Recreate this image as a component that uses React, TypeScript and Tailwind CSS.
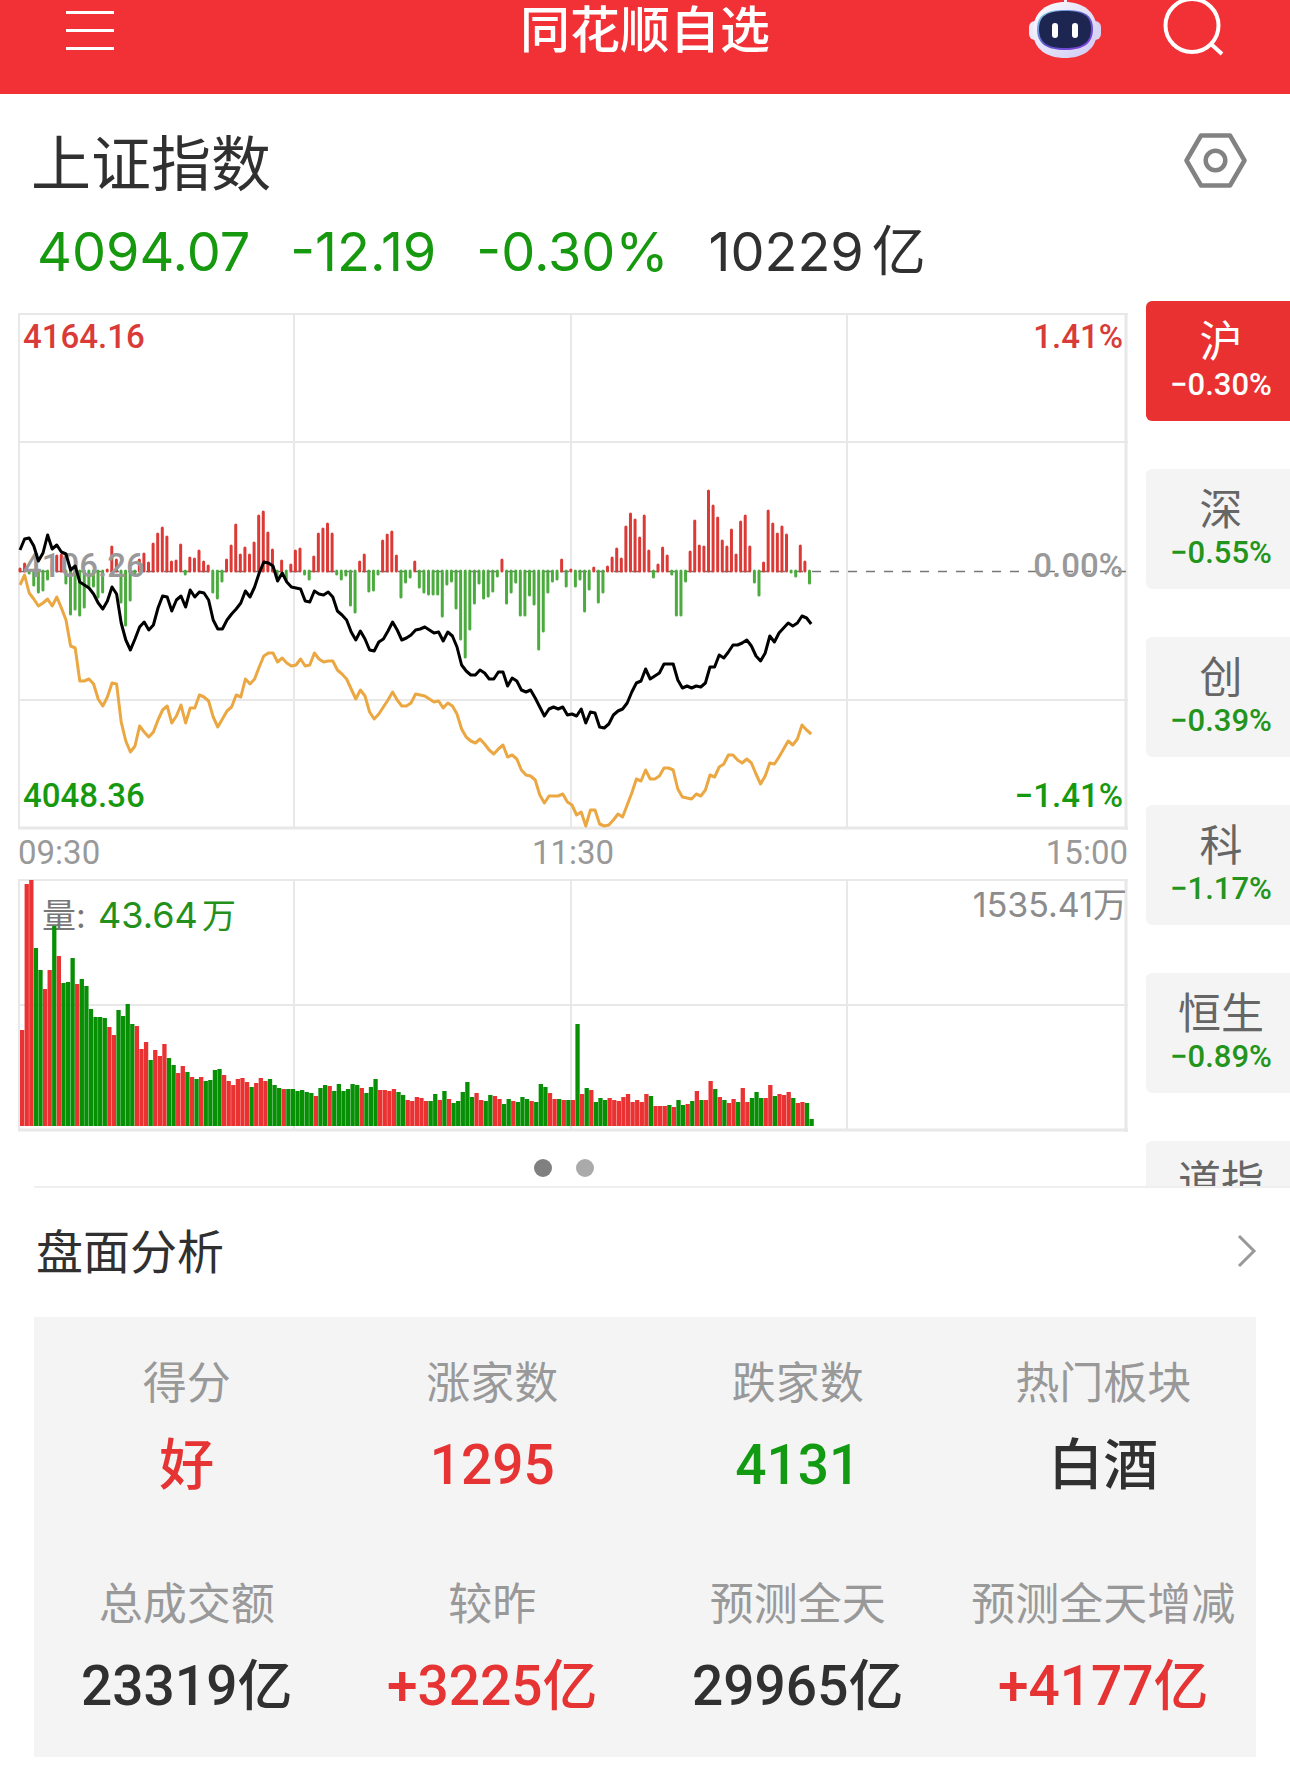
import { useState } from 'react';
import clsx from 'clsx';

const BAR_STEP = 4.59;
const LINE_STEP = 4.6;

// each entry is one trading minute
const momentum = [
  2, 7, -2, -14, -21, -19, -8, 7, 15, 16, -12, -43, -38, -44, -36, -15, -15, -26,
  -21, 1, 24, 11, -31, -54, -29, -4, 11, 17, 8, 27, 37, 43, 34, 9, 10, 26, -3, 13,
  12, 20, 9, 5, -21, -27, -10, 11, 25, 46, 16, 23, 16, 28, 55, 59, 38, 21, -6, 10,
  -8, 6, 20, 22, -3, -8, 14, 37, 42, 47, 37, -3, -8, -4, -34, -41, 9, 16, -20,
  -19, -3, 30, 36, 39, 15, -26, -11, -6, 9, -16, -21, -23, -23, -23, -45, -13,
  -10, -37, -68, -86, -58, -32, -12, -27, -25, -20, -5, 11, -32, -21, -11, -44,
  -44, -24, -33, -78, -60, -21, -10, -8, 11, -15, 1, -15, -8, -40, -18, 3, -31,
  -21, 4, 13, 22, 12, 44, 57, 51, 33, 55, 20, -6, 6, 23, 15, -3, -44, -44, -10,
  19, 50, 25, 24, 80, 65, 53, 30, 24, 41, 16, 49, 55, 24, -11, -24, 8, 60, 47,
  37, 44, 36, -1, -5, 25, 9, -12,
];

const price = [
  550, 539, 538, 546, 561, 553, 535, 549, 545, 552, 554, 570, 566, 582, 585, 588,
  594, 603, 609, 601, 587, 594, 623, 640, 650, 639, 627, 622, 630, 625, 608, 596,
  597, 611, 600, 596, 607, 590, 597, 592, 593, 600, 620, 629, 629, 620, 614, 609,
  603, 591, 597, 587, 573, 562, 563, 566, 581, 573, 582, 587, 588, 589, 601, 602,
  591, 594, 595, 592, 597, 611, 615, 620, 632, 640, 631, 639, 650, 651, 642, 639,
  631, 622, 630, 640, 638, 635, 630, 629, 627, 630, 633, 632, 641, 632, 636, 647,
  665, 671, 675, 675, 670, 673, 679, 679, 672, 672, 686, 678, 681, 690, 692, 690,
  698, 707, 716, 709, 707, 709, 707, 715, 714, 716, 709, 723, 712, 713, 727, 728,
  724, 715, 711, 709, 703, 692, 683, 681, 669, 679, 676, 673, 664, 664, 664, 680,
  688, 686, 688, 686, 687, 683, 667, 667, 655, 658, 652, 645, 645, 643, 640, 646,
  656, 661, 653, 636, 642, 633, 628, 623, 626, 623, 616, 618, 624,
];

const average = [
  585, 575, 593, 599, 606, 603, 599, 606, 597, 608, 620, 646, 648, 681, 681, 679,
  684, 699, 706, 697, 683, 684, 722, 741, 752, 746, 726, 732, 737, 732, 720, 710,
  706, 723, 716, 705, 723, 708, 708, 695, 697, 701, 717, 727, 719, 711, 707, 695,
  697, 679, 684, 679, 667, 656, 653, 653, 662, 658, 663, 666, 665, 659, 666, 665,
  653, 659, 662, 661, 661, 670, 674, 679, 689, 699, 690, 696, 712, 719, 714, 707,
  700, 692, 700, 706, 706, 703, 694, 695, 696, 699, 702, 701, 708, 703, 706, 714,
  729, 737, 741, 743, 739, 744, 750, 754, 749, 745, 757, 755, 759, 770, 775, 776,
  780, 795, 803, 796, 796, 796, 794, 802, 805, 815, 812, 826, 810, 810, 824, 826,
  825, 820, 814, 817, 805, 793, 779, 781, 770, 779, 779, 776, 768, 768, 770, 789,
  797, 798, 799, 794, 796, 790, 775, 777, 767, 764, 755, 755, 760, 763, 759, 763,
  774, 784, 776, 763, 764, 757, 749, 741, 745, 739, 725, 730, 734,
];

// positive = rising minute, negative = falling minute
const volume = [
  96, 242, 246, -178, -156, 137, 156, -200, 170, -143, -144, -168, 142, -147,
  -140, -117, -109, -109, -108, 99, 91, -116, -110, -122, -102, 100, 77, 84, -66,
  76, 70, 82, -68, -61, 53, 60, -54, 49, -47, 49, -45, -46, -56, -57, 51, 45, 41,
  47, 48, 44, -39, 43, 48, 45, -47, -41, -38, 37, -37, -37, -35, -36, -34, -33,
  30, -38, -41, 40, -35, -42, -35, -37, -42, -41, 38, -33, -39, -47, 36, 36, 35,
  37, -34, -31, 26, 25, 29, 28, 25, -25, -32, 26, -35, 27, -23, -25, -34, -44,
  -29, 33, 26, -25, -31, 30, 27, -22, -27, 25, -24, -29, -27, 25, -24, -42, -39,
  33, 27, -27, 26, -26, 26, -102, 32, -38, 36, -24, -28, -26, 28, 26, 25, 29, 32,
  24, 26, 24, 32, -30, 20, 20, 20, -21, 19, -26, -21, 22, -25, 35, -26, 26, 45,
  -37, 29, -26, 23, 27, -24, 38, 24, -28, -34, -28, 28, 41, -30, 32, 31, 34, -28,
  23, 24, -23, -7,
];

const markets = [
  { name: '沪', change: '−0.30%' },
  { name: '深', change: '−0.55%' },
  { name: '创', change: '−0.39%' },
  { name: '科', change: '−1.17%' },
  { name: '恒生', change: '−0.89%' },
  { name: '道指', change: '' },
];

const stats = [
  { label: '得分', value: '好', color: 'text-[#e63434]' },
  { label: '涨家数', value: '1295', color: 'text-[#e63434]' },
  { label: '跌家数', value: '4131', color: 'text-[#129a12]' },
  { label: '热门板块', value: '白酒', color: 'text-[#303030]' },
  { label: '总成交额', value: '23319亿', color: 'text-[#303030]' },
  { label: '较昨', value: '+3225亿', color: 'text-[#e63434]' },
  { label: '预测全天', value: '29965亿', color: 'text-[#303030]' },
  { label: '预测全天增减', value: '+4177亿', color: 'text-[#e63434]' },
];

const toPoints = (ys: number[]) =>
  ys.map((y, i) => `${(2 + i * LINE_STEP).toFixed(1)},${y - 313}`).join(' ');

function RobotIcon() {
  return (
    <svg viewBox="0 0 74 60" className="h-[60px] w-[74px]" aria-hidden="true">
      <defs>
        <linearGradient id="shell" x1="0" y1="0" x2="1" y2="1">
          <stop offset="0" stopColor="#ffffff" />
          <stop offset="0.5" stopColor="#e4e2f8" />
          <stop offset="1" stopColor="#cfc9f3" />
        </linearGradient>
        <linearGradient id="rim" x1="0" y1="0" x2="1" y2="1">
          <stop offset="0" stopColor="#8fdcf0" />
          <stop offset="0.5" stopColor="#5a55c8" />
          <stop offset="1" stopColor="#8a3ce0" />
        </linearGradient>
      </defs>
      <rect x="36" y="0" width="3" height="4" fill="#f1eefc" />
      <rect x="1" y="21" width="14" height="19" rx="6" fill="#ece9fb" />
      <rect x="59" y="21" width="14" height="19" rx="6" fill="#d9d4f6" />
      <path
        d="M37 2C54 2 69 11 69 31C69 50 54 58 37 58C20 58 5 50 5 31C5 11 20 2 37 2Z"
        fill="url(#shell)"
      />
      <path
        d="M37 10C56 10 65 15 65 29C65 44 55 50 37 50C19 50 9 44 9 29C9 15 18 10 37 10Z"
        fill="url(#rim)"
      />
      <path
        d="M37 11C55 11 63 16 63 29C63 43 54 48 37 48C20 48 11 43 11 29C11 16 19 11 37 11Z"
        fill="#1c2650"
      />
      <rect x="24" y="23" width="6" height="15" rx="3" fill="#fff" />
      <rect x="44" y="23" width="6" height="15" rx="3" fill="#fff" />
    </svg>
  );
}

function Header() {
  return (
    <header className="grid grid-cols-[1fr_auto_1fr] items-start bg-[#f23136] px-[66px] pb-[34px] text-white">
      <button type="button" aria-label="菜单" className="h-[60px] w-12">
        <svg viewBox="0 0 48 60" className="h-[60px] w-12">
          <path d="M0 12.5H48M0 30.5H48M0 48.5H48" stroke="currentColor" strokeWidth="3" />
        </svg>
      </button>
      <h1 className="text-[50px] leading-[52px] font-medium">同花顺自选</h1>
      <div className="flex justify-end gap-[60px]">
        <button type="button" aria-label="智能助手">
          <RobotIcon />
        </button>
        <button type="button" aria-label="搜索">
          <svg viewBox="0 0 62 60" className="h-[60px] w-[62px]" fill="none">
            <circle cx="30" cy="25.5" r="26.5" stroke="currentColor" strokeWidth="4" />
            <path d="M49 44L60 54" stroke="currentColor" strokeWidth="4" />
          </svg>
        </button>
      </div>
    </header>
  );
}

function Quote() {
  return (
    <section className="pr-[43px] pl-[31px]">
      <div className="flex items-center justify-between pt-6">
        <h2 className="text-[60px] leading-[84px] text-[#303030]">上证指数</h2>
        <button type="button" aria-label="设置">
          <svg
            viewBox="0 0 64 56"
            className="h-14 w-16"
            fill="none"
            stroke="#828282"
            strokeWidth="4.5"
            strokeLinejoin="round"
          >
            <path d="M18 3.5H47L61.5 28.5L47 53.5H18L3.5 28.5Z" />
            <circle cx="32.5" cy="28.5" r="9.8" />
          </svg>
        </button>
      </div>
      <p className="flex gap-10 pl-1.5 font-[Inter,'Noto_Sans_CJK_SC',sans-serif] text-[54px] leading-[99px] text-[#16990f]">
        <span>4094.07</span>
        <span>-12.19</span>
        <span>-0.30%</span>
        <span className="flex gap-2 text-[#303030]">
          10229<span>亿</span>
        </span>
      </p>
    </section>
  );
}

function PriceChart() {
  return (
    <svg
      viewBox="0 0 1110 517"
      className="block w-full font-[Roboto,sans-serif] text-[33px] font-medium"
      role="img"
      aria-label="分时走势"
    >
      <g fill="none" stroke="#e8e8e8" strokeWidth="2">
        <path d="M1 0V516M276 0V516M553 0V516M829 0V516M0 1H1110M0 129H1110M0 387H1110" />
        <path d="M1108 0V517M0 515H1110" strokeWidth="3" />
      </g>
      <path d="M2 258.5H1108" stroke="#777" strokeWidth="1.5" strokeDasharray="9 9" />
      {momentum.map((v, i) => (
        <line
          key={i}
          x1={2 + i * BAR_STEP}
          x2={2 + i * BAR_STEP}
          y1="258"
          y2={258 - v}
          stroke={v > 0 ? '#dc3a36' : '#4cab3e'}
          strokeWidth="3"
          strokeLinecap="round"
        />
      ))}
      <text x="5" y="264" fill="#999">4106.26</text>
      <text x="1105" y="264" fill="#999" textAnchor="end">0.00%</text>
      <g fill="none" strokeWidth="3" strokeLinejoin="round">
        <polyline points={toPoints(average)} stroke="#eba742" />
        <polyline points={toPoints(price)} stroke="#000" />
      </g>
      <text x="5" y="35" fill="#d93b38">4164.16</text>
      <text x="1105" y="35" fill="#d93b38" textAnchor="end">1.41%</text>
      <text x="5" y="494" fill="#16990f">4048.36</text>
      <text x="1105" y="494" fill="#16990f" textAnchor="end">−1.41%</text>
    </svg>
  );
}

function VolumeChart() {
  return (
    <svg
      viewBox="0 0 1110 253"
      className="block w-full font-[Inter,'Noto_Sans_CJK_SC',sans-serif] text-[34px]"
      role="img"
      aria-label="成交量"
    >
      <g fill="none" stroke="#e8e8e8" strokeWidth="2">
        <path d="M1 0V252M276 0V252M553 0V252M829 0V252M0 1H1110M0 126H1110" />
        <path d="M1108 0V253M0 251H1110" strokeWidth="3" />
      </g>
      <text x="24" y="49" fill="#777">量:</text>
      <text x="80" y="49" fill="#23901c" className="text-[36px]">43.64</text>
      <text x="184" y="49" fill="#23901c">万</text>
      <text x="1109" y="38" fill="#8c8c8c" textAnchor="end">1535.41万</text>
      {volume.map((v, i) => (
        <rect
          key={i}
          x={2 + i * BAR_STEP}
          y={247 - Math.abs(v)}
          width="4.3"
          height={Math.abs(v)}
          fill={v > 0 ? '#e93231' : '#078f05'}
        />
      ))}
    </svg>
  );
}

function MarketTabs() {
  const [active, setActive] = useState('沪');

  return (
    <nav className="flex w-36 flex-col gap-12 overflow-hidden contain-size">
      {markets.map((market) => (
        <button
          key={market.name}
          type="button"
          onClick={() => setActive(market.name)}
          className={clsx(
            'flex h-[120px] shrink-0 flex-col items-center rounded-l-md pt-2 pl-1.5',
            active === market.name ? 'bg-[#e93131] text-white' : 'bg-[#f4f4f4] text-[#666]',
          )}
        >
          <span className="text-[43px] leading-[58px]">{market.name}</span>
          {market.change && (
            <span
              className={clsx(
                'font-[Roboto,sans-serif] text-[31px] leading-9 font-medium',
                active !== market.name && 'text-[#23941c]',
              )}
            >
              {market.change}
            </span>
          )}
        </button>
      ))}
    </nav>
  );
}

function Analysis() {
  return (
    <section className="ml-[34px] border-t-2 border-[#efefef]">
      <a href="#analysis" className="flex items-center justify-between pr-[33px] pb-[7px] pl-0.5">
        <h2 className="text-[47px] leading-[122px] text-[#303030]">盘面分析</h2>
        <svg viewBox="0 0 20 38" className="h-[38px] w-5" fill="none">
          <path d="M2 6L17 21L2 36" stroke="#999" strokeWidth="3" />
        </svg>
      </a>
      <dl className="mr-[34px] grid grid-cols-4 gap-y-[55px] bg-[#f4f4f4] pt-[33px] pb-5 text-center">
        {stats.map((stat) => (
          <div key={stat.label}>
            <dt className="text-[44px] leading-[60px] whitespace-nowrap text-[#999]">{stat.label}</dt>
            <dd
              className={clsx(
                "mt-1 font-[Roboto,'Noto_Sans_CJK_SC',sans-serif] text-[55px] leading-[102px] font-medium",
                stat.color,
              )}
            >
              {stat.value}
            </dd>
          </div>
        ))}
      </dl>
    </section>
  );
}

export default function App() {
  return (
    <div className="min-h-screen bg-white font-['Noto_Sans_CJK_SC',sans-serif]">
      <Header />
      <Quote />
      <div className="flex">
        <div className="min-w-0 flex-1 px-[18px] pt-3">
          <PriceChart />
          <div className="flex justify-between pb-1 font-[Roboto,sans-serif] text-[33px] leading-[45px] text-[#999]">
            <span>09:30</span>
            <span>11:30</span>
            <span>15:00</span>
          </div>
          <VolumeChart />
          <div className="flex h-[54px] items-end justify-center gap-6 pr-[18px] pb-[9px]">
            <button type="button" aria-label="第1页" className="size-[18px] rounded-full bg-[#808080]" />
            <button type="button" aria-label="第2页" className="size-[18px] rounded-full bg-[#aaa]" />
          </div>
        </div>
        <MarketTabs />
      </div>
      <Analysis />
    </div>
  );
}
